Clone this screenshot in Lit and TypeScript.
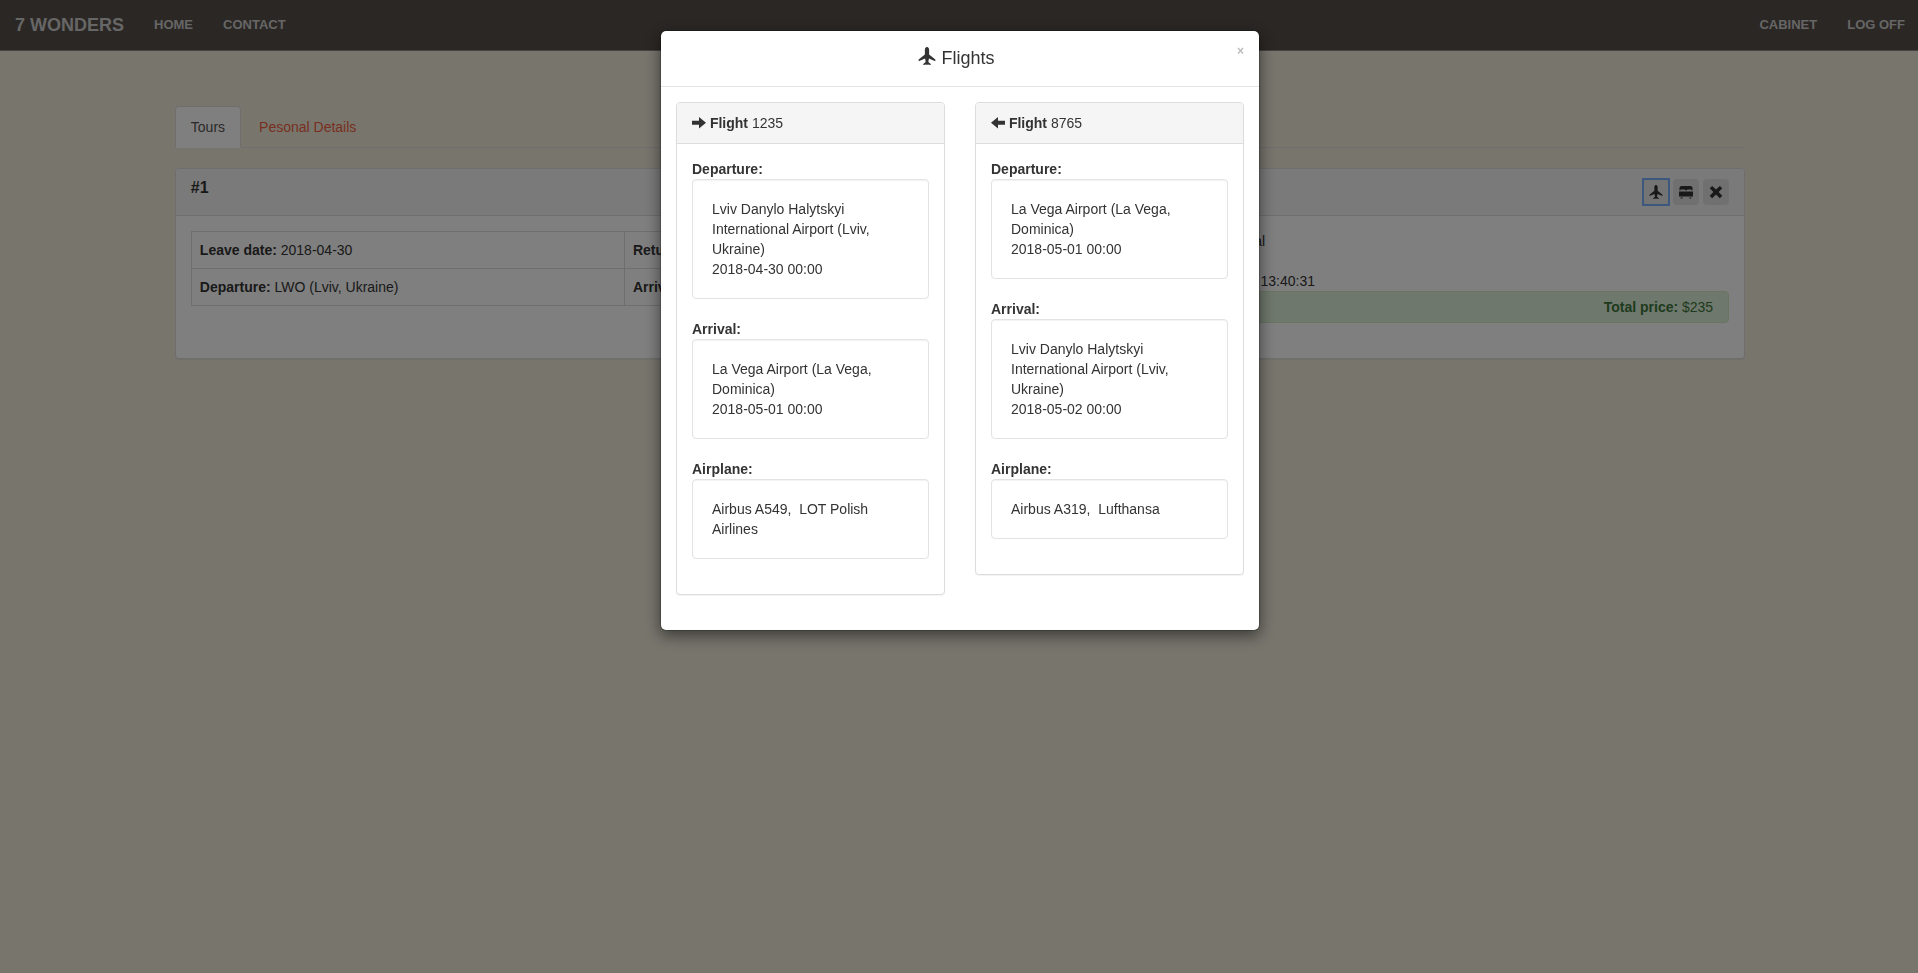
import { LitElement, html, css, svg } from "lit";
import { customElement, property } from "lit/decorators.js";

interface Stop { label: string; lines: string[]; }
interface Flight { id: string; number: string; dir: string; stops: Stop[]; }

const LVIV = "Lviv Danylo Halytskyi International Airport (Lviv, Ukraine)";
const VEGA = "La Vega Airport (La Vega, Dominica)";

const FLIGHTS: Flight[] = [
  {
    id: "out", number: "1235", dir: "right",
    stops: [
      { label: "Departure:", lines: [LVIV, "2018-04-30 00:00"] },
      { label: "Arrival:", lines: [VEGA, "2018-05-01 00:00"] },
      { label: "Airplane:", lines: ["Airbus A549,\u00a0 LOT Polish Airlines"] },
    ],
  },
  {
    id: "back", number: "8765", dir: "left",
    stops: [
      { label: "Departure:", lines: [VEGA, "2018-05-01 00:00"] },
      { label: "Arrival:", lines: [LVIV, "2018-05-02 00:00"] },
      { label: "Airplane:", lines: ["Airbus A319,\u00a0 Lufthansa"] },
    ],
  },
];

const ICONS: Record<string, unknown> = {
  plane: svg`<path d="M8 0C6.700 0 6.100 1.300 6.100 2.600V6.600L.6 11V12.600L6.300 10.200L6.800 13.400L4.700 15V16L7.300 15.500L8 16L8.700 15.500L11.300 16V15L9.200 13.400L9.700 10.200L15.400 12.600V11L9.900 6.600V2.600C9.900 1.300 9.300 0 8 0Z"/>`,
  bed: svg`<path d="M.5 6V3.500Q.5 1 3 1H13Q15.500 1 15.500 3.500V6H14.500L14 5.200H9.500L9 6H7L6.500 5.200H2L1.500 6Z"/><path d="M0 7.500H16V13H0ZM1.500 14.200H4.500L4 15.500H2ZM11.500 14.200H14.500L14 15.500H12Z"/>`,
  remove: svg`<path d="M3.600 1L8 5.200L12.400 1L15.200 3.800L11 8L15.200 12.200L12.400 15L8 10.800L3.600 15L.8 12.200L5 8L.8 3.800Z"/>`,
  right: svg`<path d="M0 6.500H8V2.300L16 8.800L8 15.300V11H0Z"/>`,
  left: svg`<path d="M16 6.500H8V2.300L0 8.800L8 15.300V11H16Z"/>`,
};

@customElement("ui-icon")
class UiIcon extends LitElement {
  @property() name = "plane";
  static styles = css`
    :host { display: inline-block; width: 1em; height: 1em; vertical-align: -1px; }
    .glyph { display: block; width: 100%; height: 100%; fill: currentColor; }
  `;
  render() {
    return html`<svg class="glyph" viewBox="0 0 16 16" aria-hidden="true">${ICONS[this.name]}</svg>`;
  }
}

@customElement("flight-card")
class FlightCard extends LitElement {
  @property({ attribute: false }) flight!: Flight;
  static styles = css`
    :host { display: block; }
    * { box-sizing: border-box; }
    .card { border: 1px solid #ddd; border-radius: 4px; background: #fff; box-shadow: 0 1px 1px rgba(0, 0, 0, 0.05); }
    .head { padding: 10px 15px; background: #f5f5f5; border-bottom: 1px solid #ddd; border-radius: 3px 3px 0 0; }
    .body { padding: 15px; }
    .label { font-weight: 700; }
    .well { min-height: 20px; margin-bottom: 20px; padding: 19px; border: 1px solid #e3e3e3; border-radius: 4px;
      background: #fff; box-shadow: inset 0 1px 1px rgba(0, 0, 0, 0.05); }
  `;
  render() {
    const f = this.flight;
    return html`<section class="card">
      <div class="head"><ui-icon name=${f.dir}></ui-icon> <b>Flight</b> ${f.number}</div>
      <div class="body">
        ${f.stops.map((s) => html`<div class="label">${s.label}</div>
          <div class="well">${s.lines.map((l) => html`<div>${l}</div>`)}</div>`)}
      </div>
    </section>`;
  }
}

@customElement("app-root")
class AppRoot extends LitElement {
  static styles = css`
    :host { display: block; min-height: 100vh; background: #f0ebdb; color: #333;
      font: 14px/20px "Liberation Sans", Arial, sans-serif; }
    * { box-sizing: border-box; }
    .navbar { display: flex; align-items: center; justify-content: space-between; height: 51px;
      background: #564e48; border-bottom: 1px solid #888; }
    .group { display: flex; align-items: center; }
    .navlink { padding: 0 15px; font-size: 13px; font-weight: 700; color: #ccc; text-decoration: none; }
    .brand { font-size: 18px; }
    .right .navlink:last-child { padding-right: 13px; }
    .page { margin: 0 calc(100% / 12); padding: 55px 13px 0 15px; }
    .tabs { display: flex; gap: 2px; border-bottom: 1px solid #ddd; }
    .tab { padding: 10px 15px; border: 1px solid transparent; border-radius: 4px 4px 0 0; margin-bottom: -1px;
      color: #f05f40; text-decoration: none; }
    .active { color: #555; background: #fff; border-color: #ddd #ddd #fff; }
    .tour { margin-top: 20px; border: 1px solid #ddd; border-radius: 4px; background: #fff;
      box-shadow: 0 1px 1px rgba(0, 0, 0, 0.05); }
    .tourhead { display: flex; justify-content: space-between; padding: 10px 15px; background: #f5f5f5;
      border-bottom: 1px solid #ddd; border-radius: 3px 3px 0 0; }
    .number { margin: 0; font-size: 16px; line-height: 18px; }
    .actions { display: flex; gap: 4px; }
    .action { display: grid; place-items: center; width: 26px; height: 26px; padding: 0; border: 0;
      border-radius: 4px; background: #e0e0e0; color: #333; font-size: 14px; }
    .current { border-radius: 0; background: #e8e8e8; outline: 2px solid #7ab0fa; outline-offset: -1px; }
    .tourbody { display: grid; grid-template-columns: 7fr 5fr; padding: 15px 0; align-items: start; }
    .col { padding: 0 15px; min-width: 0; }
    .dates { width: 100%; border-collapse: collapse; }
    .dates td { padding: 8px; border: 1px solid #ddd; width: 51%; }
    .dates td:first-child { width: 49%; }
    .price { margin-bottom: 20px; padding: 5px 15px; border: 1px solid #d6e9c6; border-radius: 4px;
      background: #dff0d8; color: #3c763d; text-align: right; }
    .overlay { position: fixed; inset: 0; padding-left: 2px; background: rgba(0, 0, 0, 0.5); }
    .modal { width: 600px; max-width: 100%; margin: 30px auto; border: 1px solid rgba(0, 0, 0, 0.2);
      border-radius: 6px; background: #fff; background-clip: padding-box; box-shadow: 0 5px 15px rgba(0, 0, 0, 0.5); }
    .modalhead { display: flex; align-items: flex-start; padding: 15px; border-bottom: 1px solid #e5e5e5; }
    .title { flex: 1; margin: 0; font-size: 18px; line-height: 25px; font-weight: 400; text-align: center; }
    .close { padding: 0; border: 0; background: none; color: #bbb;
      font: 700 12px/10px "Liberation Sans", Arial, sans-serif; }
    .flights { display: grid; grid-template-columns: 1fr 1fr; gap: 30px; align-items: start; padding: 15px 15px 35px; }
  `;
  render() {
    return html`
      <nav class="navbar">
        <div class="group">
          <a class="navlink brand" href="#">7 WONDERS</a>
          <a class="navlink" href="#">HOME</a>
          <a class="navlink" href="#">CONTACT</a>
        </div>
        <div class="group right">
          <a class="navlink" href="#">CABINET</a>
          <a class="navlink" href="#">LOG OFF</a>
        </div>
      </nav>
      <main class="page">
        <div class="tabs">
          <a class="tab active" href="#">Tours</a>
          <a class="tab" href="#">Pesonal Details</a>
        </div>
        <section class="tour">
          <header class="tourhead">
            <h4 class="number">#1</h4>
            <div class="actions">
              <button class="action current" aria-label="Flights"><ui-icon name="plane"></ui-icon></button>
              <button class="action" aria-label="Hotel"><ui-icon name="bed"></ui-icon></button>
              <button class="action" aria-label="Cancel"><ui-icon name="remove"></ui-icon></button>
            </div>
          </header>
          <div class="tourbody">
            <div class="col">
              <table class="dates">
                <tr><td><b>Leave date:</b> 2018-04-30</td><td><b>Return date:</b> 2018-05-02</td></tr>
                <tr><td><b>Departure:</b> LWO (Lviv, Ukraine)</td><td><b>Arrival:</b> La Vega, Dominica</td></tr>
              </table>
            </div>
            <div class="col">
              <div><b>Hotel:</b> Ocean Continental</div>
              <div><b>Persons:</b> 1</div>
              <div><b>Order date:</b> 2018-04-28 13:40:31</div>
              <div class="price"><b>Total price:</b> $235</div>
            </div>
          </div>
        </section>
      </main>
      <div class="overlay">
        <div class="modal" role="dialog" aria-labelledby="title">
          <header class="modalhead">
            <h4 class="title" id="title"><ui-icon name="plane"></ui-icon> Flights</h4>
            <button class="close" aria-label="Close">×</button>
          </header>
          <div class="flights">
            ${FLIGHTS.map((f) => html`<flight-card .flight=${f}></flight-card>`)}
          </div>
        </div>
      </div>`;
  }
}
